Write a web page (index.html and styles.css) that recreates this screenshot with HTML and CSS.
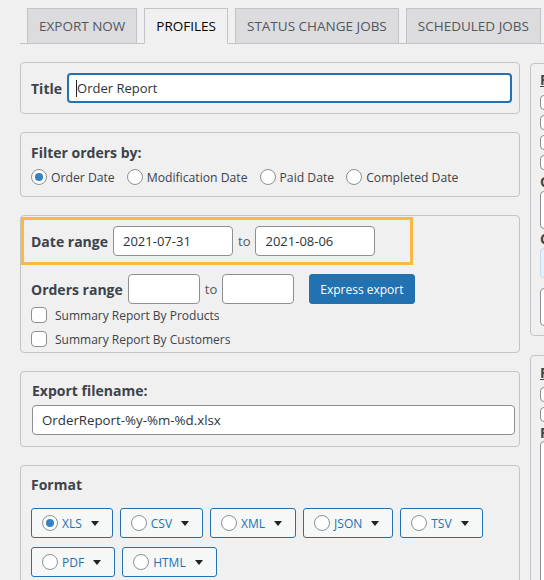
FILE: index.html
```html
<!DOCTYPE html>
<html lang="en">
<head>
<meta charset="utf-8">
<title>Profiles</title>
<link rel="stylesheet" href="styles.css">
</head>
<body>
<div class="page">
  <nav class="tabs">
    <a class="tab">EXPORT NOW</a>
    <a class="tab active">PROFILES</a>
    <a class="tab">STATUS CHANGE JOBS</a>
    <a class="tab">SCHEDULED JOBS</a>
  </nav>

  <div class="layout">
    <div class="main">
      <section class="panel p-title">
        <span class="lbl">Title</span>
        <div class="input focus"><span class="caret"></span>Order Report</div>
      </section>

      <section class="panel p-filter">
        <div class="lbl head">Filter orders by:</div>
        <div class="radios">
          <span class="ritem"><span class="radio on"></span>Order Date</span>
          <span class="ritem"><span class="radio"></span>Modification Date</span>
          <span class="ritem"><span class="radio"></span>Paid Date</span>
          <span class="ritem"><span class="radio"></span>Completed Date</span>
        </div>
      </section>

      <section class="panel p-range">
        <div class="hl">
          <span class="lbl">Date range</span>
          <div class="input date">2021-07-31</div>
          <span class="to">to</span>
          <div class="input date">2021-08-06</div>
        </div>
        <div class="orders">
          <span class="lbl">Orders range</span>
          <div class="input num"></div>
          <span class="to">to</span>
          <div class="input num"></div>
          <button class="btn-primary">Express export</button>
        </div>
        <div class="checks">
          <div class="citem"><span class="check"></span>Summary Report By Products</div>
          <div class="citem"><span class="check"></span>Summary Report By Customers</div>
        </div>
      </section>

      <section class="panel p-file">
        <div class="lbl head">Export filename:</div>
        <div class="input wide">OrderReport-%y-%m-%d.xlsx</div>
      </section>

      <section class="panel p-format">
        <div class="lbl head">Format</div>
        <div class="formats">
          <span class="fmt"><span class="radio on"></span><span class="ftxt">XLS</span><span class="dd"></span></span>
          <span class="fmt"><span class="radio"></span><span class="ftxt">CSV</span><span class="dd"></span></span>
          <span class="fmt"><span class="radio"></span><span class="ftxt">XML</span><span class="dd"></span></span>
          <span class="fmt"><span class="radio"></span><span class="ftxt">JSON</span><span class="dd"></span></span>
          <span class="fmt"><span class="radio"></span><span class="ftxt">TSV</span><span class="dd"></span></span>
          <span class="fmt"><span class="radio"></span><span class="ftxt">PDF</span><span class="dd"></span></span>
          <span class="fmt"><span class="radio"></span><span class="ftxt">HTML</span><span class="dd"></span></span>
        </div>
      </section>
    </div>

    <div class="side">
      <section class="spanel sp-a">
        <div class="shead">Filter by order</div>
        <div class="slist">
          <div class="sitem"><span class="check sm"></span>Skip suborders</div>
          <div class="sitem"><span class="check sm"></span>Export refunds</div>
          <div class="sitem"><span class="check sm"></span>Mark exported orders</div>
          <div class="sitem"><span class="check sm"></span>Export unmarked orders only</div>
        </div>
        <div class="slbl">Order statuses</div>
        <div class="sbox tall"></div>
        <div class="slbl s2">Custom fields</div>
        <div class="sbox blue"></div>
        <div class="sbox tall gap"></div>
      </section>
      <section class="spanel sp-b">
        <div class="shead">Filter by product</div>
        <div class="slist">
          <div class="sitem"><span class="check sm"></span>Export all products</div>
          <div class="sitem"><span class="check sm"></span>Exclude products</div>
        </div>
        <div class="slbl s3">Product categories</div>
        <div class="sbox huge"></div>
      </section>
    </div>
  </div>
</div>
</body>
</html>
```

FILE: styles.css
```css
html, body {
  margin: 0;
  padding: 0;
  background: #f0f0f1;
  overflow: hidden;
}
body {
  width: 544px;
  height: 580px;
  font-family: "Open Sans", "Noto Sans", sans-serif;
  font-size: 12px;
  color: #3c434a;
}
.page {
  padding-left: 20px;
}

/* tabs */
.tabs {
  display: flex;
  gap: 7px;
  height: 35px;
  padding: 8px 0 0 7px;
  border-bottom: 1px solid #c3c4c7;
  white-space: nowrap;
}
.tab {
  box-sizing: border-box;
  height: 36px;
  margin-bottom: -1px;
  padding: 0 11px;
  display: flex;
  align-items: center;
  background: #dcdcde;
  border: 1px solid #c3c4c7;
  font-size: 13.5px;
  font-weight: 500;
  color: #50575e;
  flex: none;
}
.tab.active {
  background: #f0f0f1;
  border-bottom-color: #f0f0f1;
  color: #000;
}

/* layout */
.layout {
  display: flex;
  gap: 10px;
  margin-top: 18px;
  align-items: flex-start;
}
.main {
  width: 500px;
  flex: none;
  display: flex;
  flex-direction: column;
  gap: 18px;
}
.panel {
  box-sizing: border-box;
  border: 1px solid #c3c4c7;
  border-radius: 4px;
}
.lbl {
  font-size: 14px;
  font-weight: 700;
  color: #3c434a;
  white-space: nowrap;
}
.head {
  line-height: 20px;
}

/* inputs */
.input {
  box-sizing: border-box;
  height: 30px;
  border: 1px solid #8c8f94;
  border-radius: 4px;
  background: #fff;
  color: #2c3338;
  font-size: 13px;
  display: flex;
  align-items: center;
  padding-left: 9px;
  white-space: nowrap;
}
.input.focus {
  border: 2px solid #2271b1;
  padding-left: 7px;
  flex: 1;
}
.caret {
  width: 1px;
  height: 17px;
  background: #1d2327;
}

/* title */
.p-title {
  display: flex;
  align-items: center;
  gap: 5px;
  padding: 10px 7px 10px 10px;
}

/* filter */
.p-filter {
  padding: 10px 10px 9px;
}
.radios {
  margin-top: 4px;
  height: 20px;
  display: flex;
  align-items: center;
  gap: 12px;
  font-size: 12.2px;
}
.ritem {
  display: inline-flex;
  align-items: center;
  gap: 4px;
  white-space: nowrap;
}
.radio {
  box-sizing: border-box;
  width: 16px;
  height: 16px;
  border: 1px solid #8c8f94;
  border-radius: 50%;
  background: #fff;
  display: inline-flex;
  align-items: center;
  justify-content: center;
  flex: none;
}
.radio.on::before {
  content: "";
  width: 8px;
  height: 8px;
  border-radius: 50%;
  background: #3582c4;
}

/* date range */
.p-range {
  padding: 1px 0 1px 0;
}
.hl {
  box-sizing: border-box;
  width: 392px;
  border: 3px solid #fcb942;
  padding: 6px 7px;
  display: flex;
  align-items: center;
  gap: 5px;
}
.to {
  font-size: 13px;
  color: #50575e;
}
.input.date {
  width: 120px;
}
.orders {
  margin-top: 9px;
  padding-left: 10px;
  height: 30px;
  display: flex;
  align-items: center;
  gap: 5px;
}
.input.num {
  width: 72px;
}
.btn-primary {
  box-sizing: border-box;
  height: 30px;
  margin-left: 10px;
  padding: 0 10px;
  border: 1px solid #2271b1;
  border-radius: 3px;
  background: #2271b1;
  color: #fff;
  font-family: inherit;
  font-size: 12px;
  white-space: nowrap;
}
.checks {
  padding-left: 10px;
  margin-top: -1px;
}
.citem {
  height: 24px;
  display: flex;
  align-items: center;
  gap: 8px;
  font-size: 12px;
  white-space: nowrap;
}
.check {
  box-sizing: border-box;
  width: 16px;
  height: 16px;
  border: 1px solid #8c8f94;
  border-radius: 4px;
  background: #fff;
  flex: none;
}

/* filename */
.p-file {
  padding: 9px 4px 11px 11px;
}
.input.wide {
  margin-top: 4px;
  font-size: 13.3px;
}

/* format */
.p-format {
  padding: 9px 10px 20px;
}
.formats {
  margin-top: 13px;
  display: flex;
  flex-wrap: wrap;
  gap: 9px 7px;
}
.fmt {
  box-sizing: border-box;
  height: 30px;
  display: inline-flex;
  align-items: center;
  padding: 0 13px 0 10px;
  border: 1px solid #2271b1;
  border-radius: 3px;
  background: #f6f7f7;
  color: #2271b1;
  font-size: 12px;
}
.ftxt {
  margin-left: 4px;
}
.dd {
  margin-left: 9px;
  width: 0;
  height: 0;
  border-left: 4px solid transparent;
  border-right: 4px solid transparent;
  border-top: 5px solid #1d2327;
  margin-top: 1px;
}

/* side column */
.side {
  width: 320px;
  flex: none;
  margin-top: 1px;
  display: flex;
  flex-direction: column;
  gap: 19px;
}
.spanel {
  box-sizing: border-box;
  border: 1px solid #c3c4c7;
  border-radius: 4px;
  padding-left: 9px;
  padding-right: 9px;
  white-space: nowrap;
}
.sp-a {
  padding-top: 6px;
  padding-bottom: 9px;
}
.sp-b {
  padding-top: 7px;
  height: 240px;
}
.shead {
  line-height: 20px;
  font-size: 14px;
  font-weight: 700;
  text-decoration: underline;
  color: #3c434a;
}
.slist {
  margin-top: 2px;
}
.sitem {
  height: 20px;
  display: flex;
  align-items: center;
  gap: 6px;
}
.check.sm {
  width: 15px;
  height: 15px;
}
.sp-b .sitem {
  height: 19.5px;
}
.slbl {
  font-size: 14px;
  font-weight: 700;
  line-height: 19px;
}
.slbl.s3 {
  line-height: 17px;
}
.sbox {
  box-sizing: border-box;
  border: 1px solid #8c8f94;
  border-radius: 4px;
  background: #fff;
}
.sbox.tall {
  height: 38px;
}
.sbox.blue {
  height: 30px;
  border-color: #c5d9ed;
  background: #e9f0f7;
}
.sbox.gap {
  margin-top: 10px;
}
.sbox.huge {
  height: 200px;
}
```
